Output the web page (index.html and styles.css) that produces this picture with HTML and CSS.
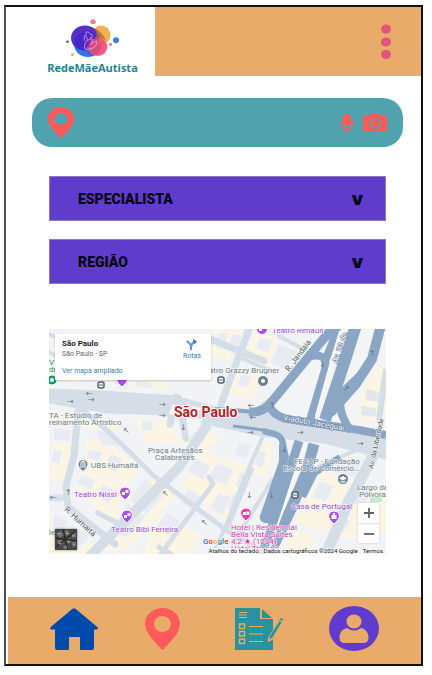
FILE: index.html
```html
<!DOCTYPE html>
<html lang="pt-BR">
<head>
<meta charset="utf-8">
<meta name="viewport" content="width=device-width, initial-scale=1">
<title>RedeMãeAutista</title>
<link rel="stylesheet" href="styles.css">
</head>
<body>
<div class="app">
  <header class="header">
    <a class="brand" href="#" >
      <svg class="brand-mark" viewBox="64 17 60 42" aria-hidden="true">
        <ellipse cx="89" cy="44" rx="14" ry="13" fill="#2f74f0"/>
        <ellipse cx="102" cy="35" rx="9.500" ry="9.500" fill="#f3b04f"/>
        <ellipse cx="86" cy="38" rx="14" ry="12.500" fill="#4a1fc4" opacity=".93"/>
        <path d="M95 28q9 4 12 13q-4-4-11-2q3-5-1-11z" fill="#a5663f" opacity=".75"/>
        <ellipse cx="98.500" cy="47" rx="9.800" ry="9" fill="#f0476f" opacity=".88"/>
        <path d="M89 39q-4 5-2 11q3 5 7 6q-5-3-4-9q1-5 4-7z" fill="#8a2bb0" opacity=".6"/>
        <path d="M87 32q3-1 4 2q3 0 2 3q-1 3-4 3q-3-3-2-8zM89 40q-5 4-3 9q3 2 7 0q5-3 5-8q-4 0-6 4M86 35q-2 3 0 6M91 37q4 4 1 8M88 48q6 2 10-4" fill="none" stroke="#d9a0dd" stroke-width=".8"/>
        <ellipse cx="94" cy="22" rx="2.800" ry="2" fill="#ee7f8b"/>
        <circle cx="94" cy="20.500" r="1.500" fill="#ee7f8b"/>
        <circle cx="117" cy="40.200" r="3" fill="#3c7cec"/>
        <circle cx="111.500" cy="44.500" r="1.400" fill="#e8607c"/>
        <circle cx="68.500" cy="41.700" r="1.300" fill="#65408e"/>
        <circle cx="73.500" cy="54.500" r="1.500" fill="#f3b04f"/>
      </svg>
      <span class="brand-name">RedeMãeAutista</span>
    </a>
    <div class="header-bar">
      <button class="icon-button" type="button" aria-label="Menu">
        <svg class="dots" viewBox="0 0 10 36"><g fill="#e25578"><ellipse cx="5" cy="5" rx="5" ry="4.500"/><ellipse cx="5" cy="18" rx="5" ry="4.500"/><ellipse cx="5" cy="30.500" rx="5" ry="4.500"/></g></svg>
      </button>
    </div>
  </header>

  <main class="main">
    <form class="search">
      <label class="search-label" for="local">
        <svg class="search-pin" viewBox="0 0 26 31" role="img" aria-label="Local"><path fill="#ff5a5a" fill-rule="evenodd" d="M13 0C5.500 0 0 5 0 12c0 7 8 14 13 19c5-5 13-12 13-19C26 5 20.500 0 13 0zM13 6a6.500 5.800 0 1 1 0 11.600a6.500 5.800 0 1 1 0-11.600z"/></svg>
      </label>
      <input class="search-input" id="local" type="text">
      <button class="icon-button" type="button" aria-label="Pesquisar por voz">
        <svg class="mic" viewBox="0 0 14 18"><rect x="3" y="0" width="8" height="12" rx="4" fill="#ff5a5a"/><path d="M1 8.500C1 16 13 16 13 8.500M7 14v2.500M3.500 17h7" fill="none" stroke="#ff5a5a" stroke-width="1.400"/><path d="M0 8.500h3M11 8.500h3" stroke="#ff5a5a"/></svg>
      </button>
      <button class="icon-button" type="button" aria-label="Pesquisar por imagem">
        <svg class="camera" viewBox="0 0 24 19"><path fill="#ff5a5a" d="M1.500 2.500H6L8 .5h8l2 2h4.500Q24 2.500 24 4v13.500Q24 19 22.500 19h-21Q0 19 0 17.500V4Q0 2.500 1.500 2.500z"/><ellipse cx="12" cy="10.500" rx="5" ry="4.600" fill="none" stroke="#50a2af" stroke-width="1.800"/></svg>
      </button>
    </form>

    <div class="filters">
      <div class="filter">
        <select class="filter-select" aria-label="Especialista"><option>ESPECIALISTA</option></select>
        <span class="filter-arrow" aria-hidden="true">v</span>
      </div>
      <div class="filter">
        <select class="filter-select" aria-label="Região"><option>REGIÃO</option></select>
        <span class="filter-arrow" aria-hidden="true">v</span>
      </div>
    </div>

    <section class="map" aria-label="Mapa de São Paulo">
      <svg class="map-canvas" viewBox="0 0 337 225" preserveAspectRatio="xMidYMid slice">
        <rect width="337" height="225" fill="#f1f3f6"/>
        <g fill="#fcf5e3">
          <path d="M165 0h28l-14 32l-20-6zM206 2l24 6l-11 30l-23-9zM188 38l25 10l-10 23l-26-8zM0 38h30v16l-30-4zM60 44l58 8v10l-58-7zM0 83l72 8l-5 12l-67-9zM84 88l38 6l7 19l-32 2zM134 96l38 10l-20 26l-22-21zM36 110l25 3l30 27l-12 17l-44-18zM3 112l19 3l-6 38l-16-2zM32 139l49 21l-18 33l-36-34zM157 122l46 18l-24 53l-47-36zM104 147l24 20l-52 56l-25-2zM0 188l50 31l-8 6H0zM213 113l12 3l-6 34l-17-8zM273 143l30 9l-28 52l-30-12zM242 198l24 8l-8 19h-26zM303 152l34 10v43l-55 5zM322 44l15-10v60l-29-5zM110 184l44 24l-14 17h-46z"/>
        </g>
        <g fill="#e8ebf1" stroke="#f4f5f8">
          <path d="M168 4h10v16h-10zM183 5l10 2l-5 14l-9-2zM211 8l13 3l-5 12l-12-3zM230 15l19 7l-12 19l-16-7zM193 44l10 4l-5 11l-10-3zM8 43h12v9H8zM65 49l14 1v7l-14-2zM86 51l18 3v6l-18-3zM92 91l12 2v9l-11-1zM140 101l14 4l-5 10l-11-3zM46 101l18 3l7 14l-18-2zM5 98l18 3l-3 12l-16-2zM40 120l14 4l-4 9l-13-5zM62 124l12 7l-8 12l-11-5zM32 145l15 6l-5 10l-14-6zM54 155l14 7l-9 13l-11-9zM4 120l9 2l-2 13l-9-2zM4 163l11 2l-2 10l-12-2zM5 184l14 8l-7 14l-9-5zM29 198l12 8l-9 12l-11-7zM96 149l20 17l-19 20l-17-15zM78 173l19 15l-20 21l-13-7zM146 130l16 7l-8 14l-16-9zM168 134l17 6l-8 16l-18-7zM139 159l14 10l-9 13l-13-9zM170 164l12 4l-8 18l-13-8zM117 183l15 9l-10 15l-16-8zM191 113l12 3l-6 14l-13-4zM209 121l9 3l-5 15l-8-3zM192 143l10 4l-6 13l-10-4zM184 164l10 4l-8 15l-8-5zM189 193l16 8l-8 14l-16-7zM270 152l15 5l-8 16l-14-5zM285 128l27 6l-6 14l-27-6zM308 158l15 4l-8 16l-13-4zM287 187l15 4l-8 14l-12-3zM322 67l14 4v14l-18-3z"/>
        </g>
        <g fill="none" stroke="#d5dee7" stroke-linecap="round" stroke-linejoin="round">
          <path d="M0 60L53 62L126 67L170 79L222 84L337 106V130L275 114L212 107L162 96L115 86L58 84L0 74z" fill="#d5dee7"/>
          <path d="M200 0L172 75M161 10l54 22M30 74L25 126L17 157L19 178L66 215" stroke-width="7"/>
          <path d="M157 98L130 138L41 227" stroke-width="10"/>
          <path d="M29 77L61 104L106 148L181 204L210 220M160 148l4 7l-53 71M49 184l23 12M0 169h17M110 218l13 8" stroke-width="5"/>
          <path d="M334 91L323 129L300 172L277 225" stroke-width="11"/>
          <path d="M331 88L337 32M214 107L194 153L177 197L167 218M203 140l-24 58M223 151l-38 62M314 118L263 141M0 23L21 35L90 45M0 5l53 22M230 7l26 14M192 29L225 43" stroke-width="4"/>
          <path d="M129 69l8 40M127 68l-6 27" stroke-width="7"/>
          <path d="M170 80L205 84L235 60" stroke-width="6"/>
        </g>
        <g fill="#f3f4f7"><path d="M124 74l7 14l-11-3zM137 87l17 3l-14 20zM140 76l15 4l-8 3z"/></g>
        <path d="M266 27L226 74L232 86L260 92L276 36zM283 0h55v104l-35-3l-45-10z" fill="#f3f4f6"/>
        <path d="M322 44l15-10v60l-29-5l5-24z" fill="#fcf5e3"/>
        <path d="M318 60l14 4v9l-16-2zM313 77l14 3v8l-15-2z" fill="#e2e7ee"/>
        <path d="M337 40L330 92" fill="none" stroke="#d5dee7" stroke-width="6"/>
        <g fill="none" stroke="#8ba6c5" stroke-linecap="butt" stroke-linejoin="round">
          <path d="M286 -4L266 20L220 76Q212 84 200 83" stroke-width="9"/>
          <path d="M262 27Q280 24 276 41L261 91" stroke-width="8"/>
          <path d="M289 -4L283 15L276 32" stroke-width="8"/>
          <path d="M307 -4L297 28L276 91" stroke-width="12"/>
          <path d="M332 -4L323 30L306 56L281 84" stroke-width="10"/>
          <path d="M318 40L296 61Q284 77 302 102" stroke-width="8"/>
          <path d="M166 80L207 83" stroke-width="4"/>
          <path d="M220 74Q222 86 238 90L310 101L337 106" stroke-width="8"/>
          <path d="M184 97L214 101L228 106" stroke-width="3"/>
          <path d="M214 102L226 105Q236 109 234 121" stroke-width="6"/>
          <path d="M230 115h7l3 13L223 190q-2 5-7 4q-6-1-5-7l19-55z" fill="#8ba6c5" stroke="none"/>
          <path d="M250 112L219 210L212 226" stroke-width="9"/>
          <path d="M265 115L257 144L242 180L220 226" stroke-width="11"/>
          <path d="M291 128L266 144L254 168" stroke-width="6"/>
        </g>
        <g fill="none" stroke="#f7f9fb" stroke-width="2"><path d="M291 2L283 29L267 87M257 114L226 204L218 226"/></g>
        <path d="M321 169l12-4v8h-12z" fill="#bfeccf"/>

        <g class="arrows"><text x="37" y="67">←</text><text x="18" y="75">→</text><text x="39" y="73">→</text><text x="110" y="78">→</text><text x="110" y="89">→</text><text x="199" y="79">←</text><text x="201" y="91">←</text><text x="198" y="106">→</text><text x="248" y="106">→</text><text x="308" y="117">→</text><text x="16" y="166">↑</text><text x="1" y="171">←</text><text x="113" y="167">↖</text><text x="152" y="196">↖</text><text x="220" y="79">↑</text><text x="270" y="38">↓</text><text x="294" y="62">↗</text><text x="320" y="27">↑</text><text x="197" y="169">↓</text><text x="219" y="169">↓</text><text x="131" y="101">↓</text><text x="74" y="104">↖</text><text x="232" y="123">↓</text></g>

        <g class="place">
          <text x="0" y="89">TA - Estúdio de</text><text x="0" y="96">reinamento Artístico</text>
          <text x="160" y="44">atro Grazzy Brugner</text>
          <text x="99" y="124">Praça Artesãos</text><text x="106" y="131">Calabreses</text>
          <text x="42" y="139">UBS Humaitá</text>
          <text x="245" y="135">FECAP - Fundação</text><text x="234" y="142">Escola de Comércio...</text>
          <text x="308" y="161">Largo da</text><text x="310" y="168">Pólvora</text>
          <text x="0" y="206">le</text>
        </g>
        <g class="place street">
          <text transform="translate(240 43) rotate(-53)">R. Jandaia</text>
          <text class="street-light" transform="translate(288 35) rotate(-70)">Av. 23 de</text>
          <text class="street-small" transform="translate(324 140) rotate(-78)">Av. da Liberdade</text>
          <text transform="translate(15 181) rotate(43)">R. Humaitá</text>
          <text class="street-light" transform="translate(234 91) rotate(10)">Viaduto Jaceguai</text>
        </g>
        <g class="place culture">
          <text x="223" y="4">Teatro Renault</text>
          <text x="25" y="168">Teatro Nissi</text>
          <text x="62" y="203">Teatro Bibi Ferreira</text>
          <text x="242" y="180">Casa de Portugal</text>
        </g>
        <g class="place hotel"><text x="182" y="201">Hotel | Residencial</text><text x="182" y="208">Bella Vista Suítes</text><text x="182" y="215">4.2 ★ (1034)</text><text x="182" y="222">Hotel Trianon</text></g>
        <g class="place green"><text x="0" y="36">V</text><text x="0" y="43">du</text></g>

        <g stroke="#fff">
          <g fill="#66818d"><path d="M34 130.500a5 5 0 0 1 5 5q0 3-5 7q-5-4-5-7a5 5 0 0 1 5-5z"/><circle cx="214" cy="52" r="5.500"/><circle cx="294" cy="150" r="5.500"/></g>
          <g fill="#ae4ced"><circle cx="213" cy="0" r="5.500"/><path d="M76 158a5.500 5.500 0 0 1 5.500 5.500q0 3-5.500 7.500q-5.500-4.500-5.500-7.500a5.500 5.500 0 0 1 5.500-5.500zM78 181a5.500 5.500 0 0 1 5.500 5.500q0 3-5.500 7.500q-5.500-4.500-5.500-7.500a5.500 5.500 0 0 1 5.500-5.500zM285 182a5.500 5.500 0 0 1 5.500 5.500q0 3-5.500 7.500q-5.500-4.500-5.500-7.500a5.500 5.500 0 0 1 5.500-5.500zM73 45a5.500 5.500 0 0 1 5.500 5.500q0 3-5.500 7.500q-5.500-4.500-5.500-7.500a5.500 5.500 0 0 1 5.500-5.500z"/></g>
          <path d="M197 179a5.500 5.500 0 0 1 5.500 5.500q0 3-5.500 7.500q-5.500-4.500-5.500-7.500a5.500 5.500 0 0 1 5.500-5.500z" fill="#f03cb0"/>
          <circle cx="3" cy="51" r="5" fill="#0f9d63"/>
        </g>
        <g fill="#fff"><path d="M31 133.500l3-2l3 2zM31.500 134h1v3h-1zM33.500 134h1v3h-1zM35.500 134h1v3h-1zM31 137.500h6v1h-6z"/><circle cx="214" cy="52" r="2"/><path d="M290 149.500l4-2.500l4 2.500l-4 2zM291.500 151.500q2.500 2 5 0v1.500q-2.500 1.500-5 0z"/><path d="M73 163h3v3h-3zM76.500 161h3v3h-3zM75 186h3v3h-3zM78.500 184h3v3h-3zM210 0h3v2h-3zM282.500 186h5v4h-5zM284 184h2v2h-2zM194 183h3v2h-3zM197.500 182.500h3v2.500h-3zM193.500 185h7v1h-7z"/><circle cx="3" cy="51" r="2"/></g>
        <g fill="#fff" stroke="#53616c" stroke-width="1.500"><rect x="49" y="53" width="6" height="6" rx="2"/><rect x="169" y="48" width="6" height="6" rx="2"/><rect x="243" y="163" width="6" height="6" rx="2"/></g>
        <path d="M50 56h4M170 51h4M244 166h4" stroke="#53616c"/>
        <text class="city" x="125" y="88">São Paulo</text>
        <text class="google" x="154" y="215"><tspan fill="#4285f4">G</tspan><tspan fill="#ea4335">o</tspan><tspan fill="#fbbc05">o</tspan><tspan fill="#4285f4">g</tspan><tspan fill="#34a853">l</tspan><tspan fill="#ea4335">e</tspan></text>
      </svg>

      <div class="map-card">
        <div class="map-card-text">
          <h2 class="map-title">São Paulo</h2>
          <p class="map-subtitle">São Paulo - SP</p>
          <a class="map-link" href="#">Ver mapa ampliado</a>
        </div>
        <a class="map-route" href="#">
          <svg class="route-icon" viewBox="0 0 12 12" aria-hidden="true"><path d="M5.500 12V8Q5.500 6 3 4L1 2M5.500 9Q6 4 10 3" fill="none" stroke="#5b92f2" stroke-width="2.200"/><path d="M7.500 0L12 2.500L9 6z" fill="#3275e8"/></svg>
          Rotas
        </a>
      </div>
      <button class="map-satellite" type="button" aria-label="Imagens de satélite">
        <svg viewBox="0 0 22 21"><path fill="#45494a" d="M0 0h22v21H0z"/><path d="M1 5l5-3l3 4l-4 3zM9 2l4-1l2 4l-4 2zM16 5l5-2v5l-4 1zM2 12l5-2l2 4l-5 3zM10 10l5-1l2 4l-5 2zM17 13l4-1v5l-4 1zM8 17l5-1l1 4H9z" fill="#77736a"/><path d="M0 9l22 3M8 0l5 21M1 18l20-16" stroke="#252d30" stroke-width="1.500"/><path d="M3 4l2 1M11 4l2 1M12 12l3 1M4 14l2 1M17 6l2 1M18 15l2 1M10 18h2" stroke="#b0a694"/></svg>
      </button>
      <div class="map-zoom">
        <button class="zoom-button" type="button" aria-label="Aumentar zoom"><svg viewBox="0 0 10 10"><path d="M0 5h10M5 0v10" stroke="#606060" stroke-width="1.800"/></svg></button>
        <button class="zoom-button" type="button" aria-label="Diminuir zoom"><svg viewBox="0 0 10 10"><path d="M0 5h10" stroke="#606060" stroke-width="1.800"/></svg></button>
      </div>
      <div class="map-credits"><span>Atalhos do teclado</span><span>Dados cartográficos ©2024 Google</span><span>Termos</span></div>
    </section>
  </main>

  <nav class="tabs" aria-label="Principal">
    <a class="tab" href="#" aria-label="Início"><svg class="tab-home" viewBox="0 0 48 42"><path fill="#004aad" d="M22.500.7q1.500-1 3 0L47.300 19q1.400 2-.3 2.500h-3V40q0 2-2 2H31q-1 0-1-1V29H19v12q0 1-1 1H7q-2 0-2-2V21.500H1q-1.700-.5-.3-2.500z"/></svg></a>
    <a class="tab" href="#" aria-label="Mapa"><svg class="tab-pin" viewBox="0 0 35 42"><path fill="#ff5a5a" fill-rule="evenodd" d="M17.500 0C7.500 0 0 7 0 16c0 9 10.500 19 17.500 26C24.500 35 35 25 35 16C35 7 27.500 0 17.500 0zM17.500 8a8.500 8 0 1 1 0 16a8.500 8 0 1 1 0-16z"/></svg></a>
    <a class="tab" href="#" aria-label="Formulário"><svg class="tab-form" viewBox="0 0 49 42"><path fill="#2a919e" d="M0 0h25v11h13v11l-5 8v4l4-2l1-1v11H0zM27 1l10 9H27z"/><path d="M4 4.500h8M4 7h8M4 9.500h8M14 18.500h14M14 26h14M14 33.500h14" stroke="#e9ab69" stroke-width="1.200"/><path d="M4.500 16h5v4.500h-5zM4.500 23.500h5V28h-5zM4.500 31h5v4.500h-5z" fill="none" stroke="#e9ab69" stroke-width="1.400"/><path d="M44.500 12.500l2.500 1.500L37.500 30l-3.500 2l.5-4z" fill="#2a919e" stroke="#e9ab69" stroke-width=".7"/><path d="M45.200 10.500q1.500-1 3 .8l-.8 1.400l-3-1z" fill="#2a919e"/></svg></a>
    <a class="tab" href="#" aria-label="Perfil"><svg class="tab-user" viewBox="0 0 50 45"><ellipse cx="25" cy="22.500" rx="25" ry="22.500" fill="#5f3ccc"/><g fill="#e9ab69"><ellipse cx="25" cy="15.500" rx="7.500" ry="7"/><path d="M18 22q7 5 14 0c5 1 7.500 5 7.500 9.500Q39.500 37 34 37H16Q10.500 37 10.500 31.500C10.500 27 13 23 18 22z"/></g></svg></a>
  </nav>
</div>
</body>
</html>
```

FILE: styles.css
```css
* { box-sizing: border-box; }

body {
  margin: 0;
  padding: 5px 9px 9px 4px;
  min-height: 100vh;
  display: flex;
  background: #fff;
  font-family: Roboto, "Liberation Sans", sans-serif;
}

svg { display: block; }

a { color: inherit; text-decoration: none; }

.app {
  flex: 1;
  min-width: 0;
  display: flex;
  flex-direction: column;
  border: 2px solid #111;
  border-left-color: #505050;
}

.header { display: flex; height: 69px; }

.brand {
  flex: 0 0 149px;
  display: flex;
  flex-direction: column;
  align-items: center;
  padding: 10px 0 0 24px;
}

.brand-mark { flex: none; width: 60px; height: 42px; }

.brand-name {
  color: #20868c;
  font: bold 11px/18px "Open Sans", "Noto Sans", sans-serif;
}

.header-bar {
  flex: 1;
  display: flex;
  justify-content: flex-end;
  align-items: center;
  padding-right: 30px;
  background: #e9ab69;
}

.icon-button {
  padding: 0;
  border: 0;
  background: none;
  cursor: pointer;
}

.dots { width: 10px; height: 36px; }

.main { flex: 1; padding-top: 22px; }

.search {
  display: flex;
  align-items: center;
  gap: 9px;
  height: 49px;
  margin: 0 18px 0 26px;
  padding: 0 16px;
  border-radius: 20px;
  background: #50a2af;
}

.search-pin { width: 26px; height: 31px; }

.search-input {
  flex: 1;
  min-width: 0;
  height: 32px;
  border: 0;
  outline: 0;
  background: transparent;
  font: 16px Roboto, sans-serif;
}

.mic { width: 14px; height: 18px; }
.camera { width: 24px; height: 19px; }

.filters {
  display: grid;
  gap: 18px;
  margin: 29px 35px 0 43px;
}

.filter { display: grid; align-items: center; }

.filter-select,
.filter-arrow { grid-area: 1 / 1; }

.filter-select {
  appearance: none;
  width: 100%;
  height: 45px;
  padding: 0 48px 0 28px;
  border: 1px solid #8c78c8;
  border-radius: 0;
  background: #5f3ccc;
  color: #06030f;
  font: 900 14px Roboto, "Liberation Sans", sans-serif;
}

.filter-arrow {
  justify-self: end;
  margin-right: 23px;
  pointer-events: none;
  color: #06030f;
  font: 900 18px/20px Inter, sans-serif;
}

.map {
  position: relative;
  height: 225px;
  margin: 45px 35px 0 43px;
  overflow: hidden;
}

.map-canvas { width: 100%; height: 100%; }

.place { fill: #6c7b85; font-size: 8px; paint-order: stroke; stroke: #f8f9fa; stroke-width: 1px; }
.street { fill: #4e5963; }
.place .street-light { fill: #fff; stroke: #587599; stroke-width: 1px; }
.street-small { font-size: 7px; }
.culture { fill: #a04bd8; }
.hotel { fill: #d63baa; }
.green { fill: #15935d; }
.arrows { fill: #67737d; font: 8px "DejaVu Sans", sans-serif; }
.city { fill: #b8201e; font-size: 14px; font-weight: bold; paint-order: stroke; stroke: #fff; stroke-width: 2px; }
.google { font: bold 8px Roboto, sans-serif; paint-order: stroke; stroke: #fff; stroke-width: 1px; }

.map-card {
  position: absolute;
  top: 5px;
  left: 6px;
  display: flex;
  justify-content: space-between;
  width: 156px;
  padding: 5px 10px 4px 7px;
  background: #fff;
  box-shadow: 0 1px 2px #0003;
}

.map-title { margin: 0; color: #222; font-size: 8px; line-height: 9px; }
.map-subtitle { margin: 1px 0 8px; color: #666; font-size: 7px; line-height: 10px; }
.map-link { display: block; color: #3480b9; font-size: 7px; line-height: 9px; }

.map-route {
  display: flex;
  flex-direction: column;
  align-items: center;
  gap: 2px;
  color: #3480b9;
  font-size: 7px;
  line-height: 8px;
}

.route-icon { width: 11px; height: 11px; }

.map-satellite {
  position: absolute;
  left: 6px;
  bottom: 4px;
  width: 22px;
  padding: 0;
  border: 0;
  box-shadow: 0 0 2px #0008;
}

.map-zoom {
  position: absolute;
  right: 7px;
  bottom: 11px;
  width: 21px;
  background: #fff;
  box-shadow: 0 0 2px #0003;
}

.zoom-button {
  display: grid;
  place-items: center;
  width: 100%;
  height: 20px;
  padding: 0;
  border: 0;
  background: none;
}

.zoom-button + .zoom-button { border-top: 1px solid #e2e2e2; }
.zoom-button svg { width: 10px; height: 10px; }

.map-credits {
  position: absolute;
  right: 0;
  bottom: 0;
  display: flex;
  gap: 5px;
  padding: 0 3px;
  background: #f5f5f5cc;
  color: #222;
  font-size: 6px;
  line-height: 6px;
  white-space: nowrap;
}

.tabs {
  display: grid;
  grid-template-columns: 95fr 90fr 94fr 50fr;
  align-items: center;
  height: 67px;
  margin-left: 2px;
  padding: 0 42px 4px;
  background: #e9ab69;
}

.tab { display: block; }
.tab-home { width: 48px; height: 42px; }
.tab-pin { width: 35px; height: 42px; }
.tab-form { width: 49px; height: 42px; }
.tab-user { width: 50px; height: 45px; }
```
